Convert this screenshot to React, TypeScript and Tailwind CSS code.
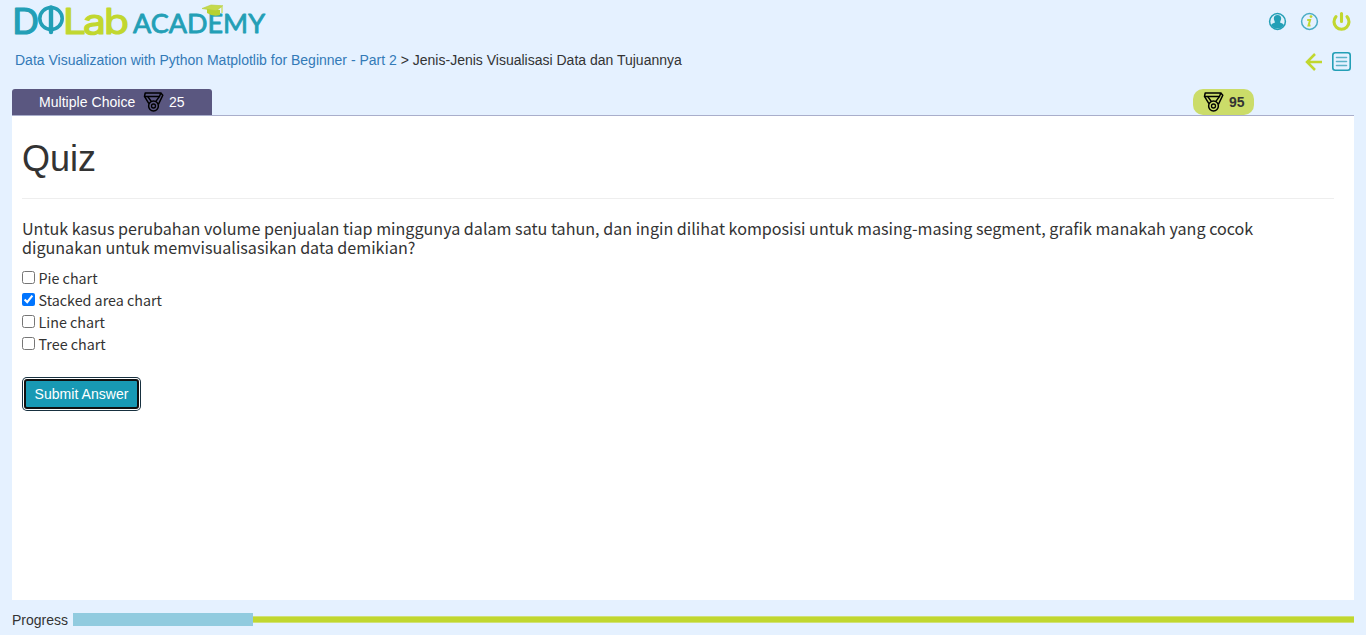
import React from "react";

const quizFont = "font-['Noto_Sans_CJK_SC',sans-serif]";

function Logo() {
  return (
    <svg width="256" height="44" viewBox="0 0 256 44" className="block overflow-visible" strokeLinejoin="round">
      <g fontFamily="Inter, sans-serif" fontSize="35" strokeWidth="1.2">
        <text x="-1.7" y="33.8" fill="#239fb6" stroke="#239fb6" textLength="27" lengthAdjust="spacingAndGlyphs">D</text>
        <g fill="#c1d72f" stroke="#c1d72f">
          <text x="49" y="33.8" textLength="23" lengthAdjust="spacingAndGlyphs">L</text>
          <text x="69" y="33.8" textLength="23" lengthAdjust="spacingAndGlyphs">a</text>
          <text x="90" y="33.8" textLength="25" lengthAdjust="spacingAndGlyphs">b</text>
        </g>
      </g>
      <g fill="none" stroke="#239fb6" strokeLinecap="round">
        <ellipse cx="37" cy="18.5" rx="11.2" ry="11" strokeWidth="3.6" />
        <path d="M37 7.5v24.5" strokeWidth="4.4" />
      </g>
      <text x="119" y="33.2" fontFamily="Lato, sans-serif" fontSize="26.5" fill="#239fb6" stroke="#239fb6" strokeWidth=".8" textLength="132" lengthAdjust="spacingAndGlyphs">ACADEMY</text>
      <path d="M193 8v5q6 4 13 2v-5" fill="#b7d12f" />
      <path d="M188 8.5l9-3.5 12 .8-7 5z" fill="#c5d94d" stroke="#b4cc38" strokeWidth=".6" />
      <path d="M208 7v6" stroke="#c1d72f" strokeWidth="1" />
    </svg>
  );
}

function Medal() {
  return (
    <svg width="21" height="20" viewBox="0 0 21 20" fill="none" stroke="#000" strokeWidth="1.5" strokeLinejoin="round" className="block shrink-0">
      <path d="M2.2 1h15.6l-1.3 3.4H1.5z" />
      <path d="M1.5 4.4l4.4 7.2M4.8 4.6l3.6 5M17.8 1l2 2.2-4.4 9.2M16.5 4.4l-3.8 5.2" />
      <circle cx="10.5" cy="14" r="4.9" />
      <circle cx="10.5" cy="14" r="2" strokeWidth="1.3" />
    </svg>
  );
}

const options = [
  ["Pie chart", false],
  ["Stacked area chart", true],
  ["Line chart", false],
  ["Tree chart", false],
] as const;

export default function App() {
  return (
    <div className="flex h-[635px] w-full flex-col bg-[#e5f1ff] px-3 font-['Liberation_Sans',Arial,sans-serif] text-sm text-[#333]">
      <header className="flex h-[89px] shrink-0 justify-between">
        <div className="flex flex-col pl-[2px]">
          <Logo />
          <nav className="mt-[6px] pl-px leading-5 whitespace-nowrap">
            <a href="#" className="text-[#337ab7]">Data Visualization with Python Matplotlib for Beginner - Part 2</a>
            {" > "}Jenis-Jenis Visualisasi Data dan Tujuannya
          </nav>
        </div>
        <div className="flex flex-col items-end pr-[3px] pt-[11px]">
          <div className="flex items-center gap-[13px]">
            <svg width="19" height="19" viewBox="0 0 19 19">
              <circle cx="9.5" cy="9.5" r="7.9" fill="#dff0fa" stroke="#239fb6" strokeWidth="1.5" />
              <path d="M9.5 3c2.9 0 3.9 1.8 3.6 4-.2 1.6-.9 2.2-1.1 3.6 1.5.7 3.2 1 3.8 2.6a7.6 7.6 0 0 1-12.6 0c.6-1.6 2.3-1.9 3.8-2.6-.2-1.4-.9-2-1.1-3.6-.3-2.2.7-4 3.6-4z" fill="#239fb6" />
            </svg>
            <svg width="19" height="19" viewBox="0 0 19 19" fill="none">
              <circle cx="9.5" cy="9.5" r="7.9" stroke="#49acc4" strokeWidth="1.5" />
              <path d="M7.2 8h2.9l-1.6 5.6h2" stroke="#c1d72f" strokeWidth="2" />
              <circle cx="11" cy="4.6" r="1.4" fill="#c1d72f" />
            </svg>
            <svg width="19" height="21" viewBox="0 0 19 21" fill="none" stroke="#c1d72f" strokeWidth="3.1" strokeLinecap="round">
              <path d="M9.5 2.5v8M4 5.6a7.5 7.5 0 1 0 11 0" />
            </svg>
          </div>
          <div className="mt-5 flex items-center gap-[10px]">
            <svg width="17" height="18" viewBox="0 0 17 18" fill="none" stroke="#c1d72f" strokeWidth="2.5">
              <path d="M10 1L2 9l8 8M2 9h15" />
            </svg>
            <svg width="19" height="19" viewBox="0 0 19 19" fill="none" stroke="#239fb6">
              <rect x=".8" y=".8" width="17.4" height="17.4" rx="2.5" strokeWidth="1.6" />
              <path d="M4.5 5.5h10M4.5 9.5h10M4.5 13.5h10" stroke="#5bb2c8" strokeWidth="1.6" strokeLinecap="round" />
            </svg>
          </div>
        </div>
      </header>

      <div className="flex h-[27px] shrink-0 items-start justify-between border-b border-[#a9aecb]">
        <div className="flex h-[26px] w-[200px] items-center rounded-t-[3px] bg-[#5a5780] pl-[27px] text-white">
          <span className="mr-2 w-[96px] tracking-[0.04px] whitespace-nowrap">Multiple Choice</span>
          <Medal />
          <span className="ml-[5px]">25</span>
        </div>
        <div className="mr-[100px] flex h-[26px] w-[61px] items-center rounded-[10px] bg-[#cbdc69] pl-[10px] font-bold">
          <Medal />
          <span className="ml-[5px]">95</span>
        </div>
      </div>

      <main className="h-[484px] shrink-0 bg-white pl-[10px] pr-5">
        <h1 className="pt-[23px] text-4xl leading-10">Quiz</h1>
        <hr className="mt-[19px] border-[#eee]" />
        <p className={`mt-5 w-[1240px] text-[16.13px] leading-[19px] ${quizFont}`}>
          Untuk kasus perubahan volume penjualan tiap minggunya dalam satu tahun, dan ingin dilihat komposisi untuk masing-masing segment, grafik manakah yang cocok digunakan untuk memvisualisasikan data demikian?
        </p>
        <div className={`mt-[10px] text-[14.3px] leading-[22px] ${quizFont}`}>
          {options.map(([label, checked]) => (
            <label key={label} className="flex h-[22px] items-center">
              <input type="checkbox" defaultChecked={checked} className="-mt-px mr-[3.5px] size-[13px]" />
              {label}
            </label>
          ))}
        </div>
        <button className="ml-[2px] mt-[24px] block h-[30px] w-[115px] rounded-[3px] border-2 border-[#101010] bg-[#1899b4] text-sm tracking-[0.04px] whitespace-nowrap text-white shadow-[0_0_0_1px_#fff,0_0_0_2px_#17303f]">
          Submit Answer
        </button>
      </main>

      <footer className="flex h-[35px] items-center pt-1">
        <span className="w-[61px] pt-px">Progress</span>
        <div className="h-[13px] w-[180px] bg-[#91cbdf]" />
        <div className="h-[7px] flex-1 border-y border-[#d0e178] bg-[#c1d72f]" />
      </footer>
    </div>
  );
}
